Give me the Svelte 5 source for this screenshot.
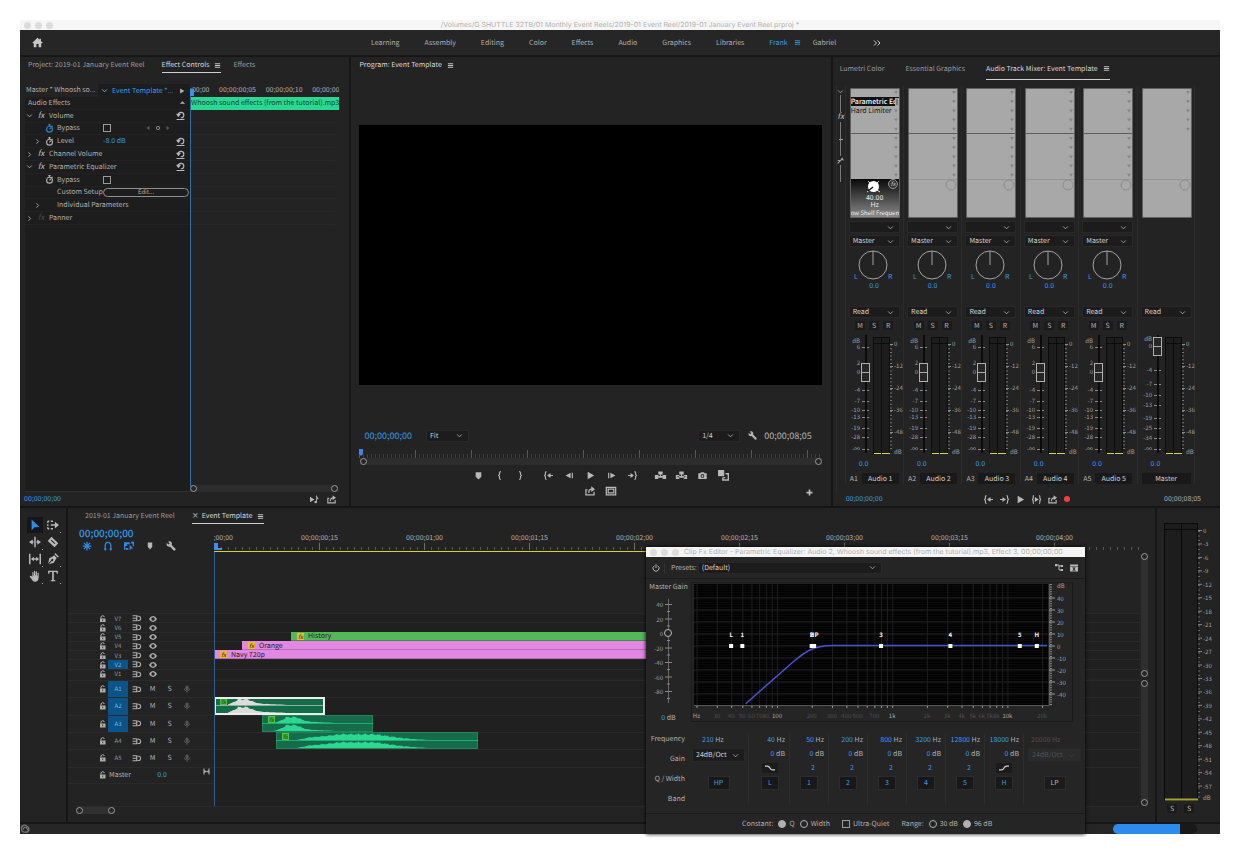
<script lang="ts">
  // Editing workspace: effect controls, program monitor, track mixer, timeline and the clip EQ window.

  interface Glyph {
    fill?: string;
    line?: string;
  }

  // All glyphs are drawn on a 16 x 16 grid.
  const ICONS: Record<string, Glyph> = {
    home: { fill: 'M8 1 0.5 8.2 1.8 9.4 2.6 8.7V15H6.4V10H9.6V15H13.4V8.7L14.2 9.4 15.5 8.2 13 5.8V2.5H11V4Z' },
    menu: { line: 'M2 4H14M2 8H14M2 12H14' },
    down: { line: 'M2.5 5.5 8 11 13.5 5.5' },
    right: { line: 'M5.5 3 10.5 8 5.5 13' },
    more: { line: 'M2 3 7 8 2 13M9 3 14 8 9 13' },
    up: { fill: 'M2 11H14L8 5Z' },
    play: { fill: 'M3 1.5V14.5L14.5 8Z' },
    watch: { line: 'M8 4A5.2 5.2 0 1 0 8 14.5 5.2 5.2 0 1 0 8 4M6 1H10M8 1V4M8 9.5 10.5 6.5M12 3.5 13.5 5' },
    reset: { line: 'M4 6.5A5 4.8 0 1 1 8.5 12M1 15H15', fill: 'M0 5 4.2 11 9 5Z' },
    keyL: { fill: 'M12 2V14L4 8Z' },
    keyR: { fill: 'M4 2V14L12 8Z' },
    keyDot: { line: 'M8 3.5A4.5 4.5 0 1 0 8 12.5 4.5 4.5 0 1 0 8 3.5' },
    note: { fill: 'M0 3V13L8 8ZM11 1H12.4Q12.6 4 15 6L14 9Q14 6.500 12.4 6V12.500A2.300 2.100 0 1 1 11 10.700Z' },
    share: { line: 'M4 6H1.500V14H14.500V9M6 11Q6 5 11 5', fill: 'M10 0.500 16 5 10 9.500Z' },
    marker: { fill: 'M3 2H13V10L8 15 3 10Z' },
    braceL: { line: 'M10.500 1Q8 1 8 3.500V6L6.500 8 8 10V12.500Q8 15 10.500 15' },
    braceR: { line: 'M5.500 1Q8 1 8 3.500V6L9.500 8 8 10V12.500Q8 15 5.500 15' },
    goIn: { line: 'M4.500 1Q2.500 1 2.500 3.500V6L1 8 2.500 10V12.500Q2.500 15 4.500 15M9 8H16', fill: 'M11.500 3.500V12.500L5.500 8Z' },
    goOut: { line: 'M11.500 1Q13.500 1 13.500 3.500V6L15 8 13.500 10V12.500Q13.500 15 11.500 15M0 8H7', fill: 'M4.500 3.500V12.500L10.500 8Z' },
    playIO: { line: 'M3.500 1Q2 1 2 3.500V6L0.800 8 2 10V12.500Q2 15 3.500 15M12.500 1Q14 1 14 3.500V6L15.200 8 14 10V12.500Q14 15 12.500 15', fill: 'M5 3.500V12.500L12 8Z' },
    stepBack: { fill: 'M10 3V13L1 8Z', line: 'M13 3V13' },
    stepFwd: { fill: 'M6 3V13L15 8Z', line: 'M3 3V13' },
    lift: { fill: 'M-2 7H4V14H-2ZM12 7H18V14H12ZM4 1H12V6H4ZM7 6H9V9H11V8L13 10.500 11 13V12H5V13L3 10.500 5 8V9H7Z' },
    extract: { fill: 'M4 1H12V6H4ZM-2 7H4V9H1V11H4V14H-2ZM18 7H12V9H15V11H12V14H18ZM7 6H9V9H13V12H3V9H7Z' },
    camera: { fill: 'M0.500 4H4L5.500 2H10.500L12 4H15.500V14H0.500ZM8 5.500A3.300 3.300 0 1 0 8 12.100 3.300 3.300 0 1 0 8 5.500ZM8 7A1.800 1.800 0 1 1 8 10.600 1.800 1.800 0 1 1 8 7Z' },
    compare: { fill: 'M0 0H9V9H0Z', line: 'M11 5.500H15V14.500H7V11M10.500 11H8' },
    safe: { line: 'M0.500 2H15.500V14H0.500ZM3.500 5H12.500V11H3.500Z' },
    plus: { fill: 'M6 1H10V6H15V10H10V15H6V10H1V6H6Z' },
    wrench: { fill: 'M1.200 3 4 5.600 5.900 3.800 3.300 1Q7-.5 9 2.500 10 4.500 9 6.300L15.500 12.800Q15.500 15.500 12.800 15.500L6.500 9Q3.500 10 1.500 7.500 0.300 5.500 1.200 3Z' },
    pointer: { fill: 'M3.500 0.500V15L7.500 11 14 10.500Z' },
    trackSel: { line: 'M1 3H3M5 3H8M1 13H3M5 13H8M1 3V5M1 7V9M1 11V13M5 8H12', fill: 'M10.500 3.500 16 8 10.500 12.500Z' },
    ripple: { line: 'M8 1V15M2 8H6M10 8H14', fill: 'M5 4.500V11.500L0 8ZM11 4.500V11.500L16 8Z' },
    razor: { fill: 'M6 1 15 9.500 10 15 1 6.500ZM5 6 10 10.800 11 9.700 6 5Z' },
    slip: { line: 'M1 1V15M15 1V15M4 8H12', fill: 'M6.500 5V11L2.500 8ZM9.500 5V11L13.500 8Z' },
    pen: { fill: 'M9.500 3 13 6.500 11.500 8.500 9 13 2.500 15 6.200 10.700A1.500 1.500 0 1 0 5.400 9.800L1.500 14 3 7 7.500 4.500ZM11 0 16 5 14.500 6 10 1.500Z' },
    hand: { fill: 'M4.500 9V3Q5.300 2 6 3V7H6.700V1.500Q7.500.5 8.300 1.500V7H9V2.200Q9.900 1.200 10.600 2.300V7.600H11.300V4Q12.200 3 12.900 4V10Q12.500 15 9 15.500H7.500Q5.500 15.500 4 13L0.800 8.500Q1.500 7 3 8Z' },
    type: { fill: 'M1.500 1H14.500V5H13L12.400 2.800H9.100V13.300L11 13.800V15H5V13.800L6.900 13.300V2.800H3.600L3 5H1.500Z' },
    nest: { line: 'M8 1V15M1 8H15M3 3 13 13M13 3 3 13' },
    magnet: { line: 'M3.500 15V7.500A4.500 5.500 0 0 1 12.500 7.500V15M1.500 13H5.500M10.500 13H14.500' },
    linked: { fill: 'M0 2H9V5H5V8H2V14H0ZM3 11H7V14H3ZM9 6 15 12 11.500 12 9 15ZM11 1H16V9L14 7V4H11Z' },
    shield: { fill: 'M3.500 1H12.500V9.500L8 15 3.500 9.500Z' },
    lock: { fill: 'M2 7H13V15H2ZM6.700 9V12.500H8.300V9Z', line: 'M4 7V4Q4.500 1.500 7.500 1.500 10.500 1.500 10.500 4' },
    sync: { line: 'M1 3H8.500V12H1M1 7.500H8M10 4H12.500A2.700 3.600 0 1 1 12.500 11.500H10' },
    eye: { fill: 'M0 8Q3 2 8 2 13 2 16 8 13 14 8 14 3 14 0 8ZM8 4.500A3.500 3.500 0 1 0 8 11.500 3.500 3.500 0 1 0 8 4.500Z' },
    mic: { fill: 'M5 3Q8-1.500 11 3V8.500Q8 12.500 5 8.500Z', line: 'M2.500 7Q3 12 8 12 13 12 13.500 7M8 12V15.500' },
    bowtie: { fill: 'M1 1H3.500V5L8 7.500 12.500 5V1H15V15H12.500V11L8 8.500 3.500 11V15H1Z' },
    power: { line: 'M4.500 3.500A6 6 0 1 0 11.500 3.500M8 0.500V8' },
    route: { fill: 'M0 0H4.500V4.500H0ZM11.500 2H16V6H11.500ZM11.500 10H16V14H11.500Z', line: 'M4 2.200H8V12H12M8 4H12' },
    closeBox: { fill: 'M0 1H16V4H0ZM0 5H16V15H0ZM4.500 6.500 7 10 4.500 13.500H7L8 11.600 9 13.500H11.500L9 10 11.500 6.500H9L8 8.400 7 6.500Z' },
    cloud: { line: 'M1 8A5 5 0 0 1 10 4 5 5 0 0 1 10 13H5A4.500 4.500 0 0 1 1 8M4 9A3 3 0 0 1 9 6L11 10M7 13Q14 13 12 7' },
    shelfL: { line: 'M0 5H4Q6.500 5 8 8 9.500 11 12 11H16' },
    shelfH: { line: 'M0 11H4Q6.500 11 8 8 9.500 5 12 5H16' },
    sendIcon: { line: 'M3 13 8 8H3M8 8 11 4 13 8' }
  };

  const workspaces = ['Learning', 'Assembly', 'Editing', 'Color', 'Effects', 'Audio', 'Graphics', 'Libraries'];

  interface EffectRow {
    label: string;
    level: 0 | 1 | 2;
    twirl?: 'down' | 'right';
    mark?: 'fx' | 'off' | 'watch' | 'active';
    value?: 'check' | 'level' | 'edit';
    keys?: boolean;
    reset?: boolean;
  }

  const effectRows: EffectRow[] = [
    { label: 'Volume', level: 1, twirl: 'down', mark: 'fx', reset: true },
    { label: 'Bypass', level: 2, mark: 'active', value: 'check', keys: true },
    { label: 'Level', level: 2, twirl: 'right', mark: 'watch', value: 'level', reset: true },
    { label: 'Channel Volume', level: 1, twirl: 'right', mark: 'fx', reset: true },
    { label: 'Parametric Equalizer', level: 1, twirl: 'down', mark: 'fx', reset: true },
    { label: 'Bypass', level: 2, mark: 'watch', value: 'check' },
    { label: 'Custom Setup', level: 2, value: 'edit' },
    { label: 'Individual Parameters', level: 2, twirl: 'right' },
    { label: 'Panner', level: 1, twirl: 'right', mark: 'off' }
  ];

  const transport = [
    ['marker', 'braceL', 'braceR'],
    ['goIn', 'stepBack', 'play', 'stepFwd', 'goOut'],
    ['lift', 'extract', 'camera', 'compare']
  ];
  const mixTransport = ['goIn', 'goOut', 'play', 'playIO', 'share'];
  const tools = ['pointer', 'trackSel', 'ripple', 'razor', 'slip', 'pen', 'hand', 'type'];
  const seqTools = ['nest', 'magnet', 'linked', 'shield', 'wrench'];

  type Mark = [string, number];

  // Fader scale labels: text and y inside the 120px fader block.
  const trackMarks: Mark[] = [['dB', 6], ['6', 12], ['2', 28], ['0', 37], ['-4', 55], ['-7', 66], ['-10', 75], ['-13', 82], ['-19', 93], ['-28', 102], ['-∞', 114]];
  const masterMarks: Mark[] = [['dB', 4], ['0', 11], ['-4', 35], ['-7', 49], ['-10', 60], ['-13', 70], ['-19', 83], ['-25', 93], ['-34', 103], ['-∞', 114]];
  const meterMarks: Mark[] = [['0', 9], ['-12', 31], ['-24', 53], ['-36', 75], ['-48', 97], ['dB', 117]];

  const strips = [1, 2, 3, 4, 5, 0].map((n) => ({
    id: n ? `A${n}` : '',
    name: n ? `Audio ${n}` : 'Master',
    master: n === 0,
    loaded: n === 1
  }));

  const videoTracks = ['V7', 'V6', 'V5', 'V4', 'V3', 'V2', 'V1'];
  const audioTracks = ['A1', 'A2', 'A3', 'A4', 'A5'];
  const targeted = ['V2', 'A1', 'A2', 'A3'];

  const MAJOR = 105;
  const timeMarks = ['00;00;00;00', '00;00;00;15', '00;00;01;00', '00;00;01;15', '00;00;02;00', '00;00;02;15', '00;00;03;00', '00;00;03;15', '00;00;04;00'];

  interface VideoClip {
    track: string;
    name: string;
    start: number;
    color: string;
  }
  const videoClips: VideoClip[] = [
    { track: 'V5', name: 'History', start: 77, color: 'green' },
    { track: 'V4', name: 'Orange', start: 28, color: 'pink' },
    { track: 'V3', name: 'Navy 720p', start: 0, color: 'pink' }
  ];
  const audioClips = [
    { track: 'A2', start: 0, width: 111, selected: true, from: 14, peak: 29, to: 75, hump: 10 },
    { track: 'A3', start: 48, width: 111, selected: false, from: 12, peak: 30, to: 75, hump: 10 },
    { track: 'A4', start: 62, width: 202, selected: false, from: 22, peak: 84, to: 150, hump: 36 }
  ];

  // Envelope of one channel, drawn upward from its baseline: a hump with a low tail.
  function wave(base: number, from: number, peak: number, to: number, hump: number): string {
    let d = `M${from} ${base}`;
    for (let x = from; x <= to; x++) {
      const away = (x - peak) / hump;
      const edge = Math.min((x - from) / 12, (to - x) / (to - peak), 1);
      const level = 0.85 * Math.exp(-away * away) + 0.35 * edge;
      const spike = 0.7 + 0.3 * Math.abs(Math.sin(x * 2.7) * Math.cos(x * 1.3));
      d += `L${x} ${(base - 7 * Math.min(level, 1) * spike).toFixed(1)}`;
    }
    return d + `L${to} ${base}Z`;
  }

  const masterMeter = Array.from({ length: 20 }, (_, i) => (i ? `-${3 * i}` : '0'));

  // Equalizer graph: log frequency across, 1.2px per dB upward.
  const freqX = (f: number) => 86 + 115.2 * Math.log10(f / 100);
  const gainY = (g: number) => 63.5 - 1.2 * g;
  const gridFreqs = [20, 30, 40, 50, 60, 70, 80, 90, 100, 200, 300, 400, 500, 600, 700, 800, 900, 1000, 2000, 3000, 4000, 5000, 6000, 7000, 8000, 9000, 10000, 20000];
  const freqLabels: [string, number][] = [['Hz', 20], ['30', 30], ['40', 40], ['50', 50], ['60', 60], ['70', 70], ['80', 80], ['100', 100], ['200', 200], ['300', 300], ['400', 400], ['500', 500], ['700', 700], ['1k', 1000], ['2k', 2000], ['3k', 3000], ['4k', 4000], ['5k', 5000], ['6k', 6000], ['7k', 7000], ['8k', 8000], ['10k', 10000], ['20k', 20000]];
  const strongLabels = ['Hz', '100', '1k', '10k'];
  const points: [string, number][] = [['L', 40], ['1', 50], ['2', 200], ['HP', 210], ['3', 800], ['4', 3200], ['5', 12800], ['H', 18000]];
  const gainMarks = [40, 30, 20, 10, 0, -10, -20, -30, -40];

  const bands = [
    { name: 'L', freq: 40, shelf: 'shelfL' },
    { name: '1', freq: 50 },
    { name: '2', freq: 200 },
    { name: '3', freq: 800 },
    { name: '4', freq: 3200 },
    { name: '5', freq: 12800 },
    { name: 'H', freq: 18000, shelf: 'shelfH' }
  ];

  let constant = $state('Q');
  let range = $state('96');
  let ultraQuiet = $state(false);
  let masterGain = $state(0);
</script>

{#snippet icon(name: string, size: number)}
  <svg class="icon" width={size} height={size} viewBox="0 0 16 16" aria-hidden="true">
    {#if ICONS[name].fill}<path class="solid" d={ICONS[name].fill} />{/if}
    {#if ICONS[name].line}<path class="stroke" d={ICONS[name].line} />{/if}
  </svg>
{/snippet}

{#snippet picker(value: string, label: string, disabled: boolean)}
  <span class="picker" class:disabled>
    <select aria-label={label} {disabled}><option>{value}</option></select>
    {@render icon('down', 7)}
  </span>
{/snippet}

{#snippet tabMenu()}
  <span class="tab-menu">{@render icon('menu', 7)}</span>
{/snippet}

<div class="page">
  <div class="app">
    <header class="titlebar">
      <span class="light"></span><span class="light"></span><span class="light"></span>
      <span class="doc">/Volumes/G SHUTTLE 32TB/01 Monthly Event Reels/2019-01 Event Reel/2019-01 January Event Reel.prproj *</span>
    </header>

    <div class="workbar">
      <button class="home" aria-label="Home">{@render icon('home', 11)}</button>
      <nav>
        {#each workspaces as name}
          <a href="#{name}">{name}</a>
        {/each}
        <a href="#Frank" class="current">Frank{@render tabMenu()}</a>
        <a href="#Gabriel" class="near">Gabriel</a>
        <button class="overflow" aria-label="More workspaces">{@render icon('more', 8)}</button>
      </nav>
    </div>

    <div class="upper">
      <section class="panel controls">
        <div class="tabs">
          <button class="tab">Project: 2019-01 January Event Reel</button>
          <button class="tab active second">Effect Controls{@render tabMenu()}</button>
          <button class="tab third">Effects</button>
        </div>
        <div class="fx-body">
          <div class="fx-list">
            <div class="fx-head">
              <span class="src">Master * Whoosh so...</span>
              <button class="seq">{@render icon('down', 7)}<span>Event Template *...</span></button>
              {@render icon('play', 6)}
            </div>
            <div class="fx-rows">
              <div class="fx-row group"><span>Audio Effects</span>{@render icon('up', 7)}</div>
              {#each effectRows as row}
                <div class="fx-row" class:deep={row.level === 2}>
                  <div class="prop">
                    <span class="twirl">{#if row.twirl}{@render icon(row.twirl, 7)}{/if}</span>
                    <span class="mark" class:off={row.mark === 'off'} class:on={row.mark === 'active'}>
                      {#if row.mark === 'fx' || row.mark === 'off'}
                        <i>fx</i>
                      {:else if row.mark}
                        {@render icon('watch', 9)}
                      {/if}
                    </span>
                    <span class="name">{row.label}</span>
                  </div>
                  <div class="value">
                    {#if row.value === 'check'}
                      <input type="checkbox" aria-label={row.label} />
                    {:else if row.value === 'level'}
                      <span class="num">-8.0 dB</span>
                    {:else if row.value === 'edit'}
                      <button class="edit">Edit...</button>
                    {/if}
                    {#if row.keys}
                      <span class="keys">
                        {@render icon('keyL', 6)}<b>{@render icon('keyDot', 6)}</b>{@render icon('keyR', 6)}
                      </span>
                    {/if}
                  </div>
                  {#if row.reset}<button class="reset" aria-label="Reset {row.label}">{@render icon('reset', 9)}</button>{/if}
                </div>
              {/each}
            </div>
          </div>
          <div class="fx-time">
            <div class="fx-ruler"><span class="first">;00;00</span><span>00;00;00;05</span><span>00;00;00;10</span><span>00;00;00</span></div>
            <div class="fx-lanes">
              <div class="fx-clip">Whoosh sound effects (from the tutorial).mp3</div>
              {#each effectRows as _}<div class="fx-lane"></div>{/each}
            </div>
            <div class="zoombar"><i></i><i></i></div>
            <div class="playhead"></div>
          </div>
        </div>
        <footer class="fx-foot">
          <span class="num">00;00;00;00</span>
          <span class="pair">{@render icon('note', 9)}{@render icon('share', 9)}</span>
        </footer>
      </section>

      <section class="panel program">
        <div class="tabs"><button class="tab lit">Program: Event Template{@render tabMenu()}</button></div>
        <div class="viewer"></div>
        <div class="monitor-bar">
          <span class="tc">00;00;00;00</span>
          <span class="fit">{@render picker('Fit', 'Zoom level', false)}</span>
          <span class="res">{@render picker('1/4', 'Playback resolution', false)}</span>
          {@render icon('wrench', 9)}
          <span class="dur">00;00;08;05</span>
        </div>
        <svg class="scrub" height="12" aria-hidden="true">
          <defs>
            <pattern id="minor" width="4" height="12" patternUnits="userSpaceOnUse"><rect y="6" width="1" height="4" fill="#3e3e3e" /></pattern>
            <pattern id="major" width="56" height="12" patternUnits="userSpaceOnUse"><rect y="2" width="1" height="8" fill="#585858" /></pattern>
          </defs>
          <rect width="100%" height="12" fill="url(#minor)" />
          <rect width="100%" height="12" fill="url(#major)" />
          <path d="M0 1H4V6L2 8 0 6Z" fill="#3d86e8" />
        </svg>
        <div class="zoombar"><i></i><i></i></div>
        <div class="buttons">
          {#each transport as group}
            <div class="button-group">
              {#each group as name}
                <button aria-label={name}>{@render icon(name, name === 'compare' ? 11 : 9)}</button>
              {/each}
            </div>
          {/each}
        </div>
        <div class="buttons second-row">
          <button aria-label="Export">{@render icon('share', 10)}</button>
          <button aria-label="Safe margins">{@render icon('safe', 10)}</button>
          <button class="add" aria-label="Button editor">{@render icon('plus', 7)}</button>
        </div>
      </section>

      <section class="panel mixer">
        <div class="tabs tall">
          <button class="tab">Lumetri Color</button>
          <button class="tab middle">Essential Graphics</button>
          <button class="tab active middle">Audio Track Mixer: Event Template{@render tabMenu()}</button>
        </div>
        <div class="mix-body">
          <div class="rack-side">
            {@render icon('down', 7)}<hr /><i>fx</i><hr /><span></span><hr />{@render icon('sendIcon', 9)}<hr />
          </div>
          {#each strips as strip}
            <div class="strip">
              <div class="rack">
                <svg width="50" height="130" viewBox="0 0 50 130" aria-hidden="true">
                  {#each Array(strip.master ? 5 : 10) as _, i}
                    {#if !strip.loaded || i !== 1}<path d="M44 {3 + i * 9.2}h4l-2 3z" fill="#868686" />{/if}
                  {/each}
                  {#if !strip.master}<rect y="45" width="50" height="1" fill="#5c5c5c" />{/if}
                  <rect y="91" width="50" height="1" fill="#969696" />
                  {#if !strip.loaded}<circle cx="43" cy="97" r="5" fill="none" stroke="#8b8b8b" />{/if}
                </svg>
                {#if strip.loaded}
                  <div class="inserts">
                    <button class="slot picked"><span>Parametric Ec</span><b></b></button>
                    <button class="slot">Hard Limiter</button>
                    <div class="tweak">
                      <svg width="50" height="16" viewBox="0 0 50 16" aria-hidden="true">
                        <path d="M18 2l2 2M29 2l-2 2M17 13l3-2M30 13l-3-2" stroke="#ddd" fill="none" />
                        <circle cx="23.500" cy="7.500" r="5.500" fill="#fff" />
                        <path d="M23 8l-5 4" stroke="#111" stroke-width="1.500" />
                        <circle cx="43" cy="5" r="4.500" fill="#333" stroke="#999" />
                        <text x="43" y="7" class="fx-badge">fx</text>
                      </svg>
                      <span>40.00</span><span>Hz</span><span class="param">ow Shelf Frequency</span>
                    </div>
                  </div>
                {/if}
              </div>
              {#if !strip.master}
                <div class="cell input">{@render picker('', `${strip.name} input`, false)}</div>
                <div class="cell output">{@render picker('Master', `${strip.name} output`, false)}</div>
                <div class="cell pan">
                  <svg width="50" height="31" viewBox="0 0 50 31" aria-hidden="true">
                    <circle cx="24" cy="15" r="14" fill="none" stroke="#a3a3a3" />
                    <path d="M24 1V15" stroke="#a3a3a3" />
                    <text x="5" y="29">L</text><text x="39" y="29">R</text>
                  </svg>
                  <span class="num">0.0</span>
                </div>
              {/if}
              <div class="cell auto">{@render picker('Read', `${strip.name} automation`, false)}</div>
              {#if !strip.master}
                <div class="cell msr"><button>M</button><button>S</button><button>R</button></div>
              {/if}
              <div class="fader">
                <svg width="56" height="120" viewBox="0 0 56 120" aria-hidden="true">
                  {#each strip.master ? masterMarks : trackMarks as [text, y]}
                    <text class="lm" x="10" y={y + 2}>{text}</text>
                    {#if text !== 'dB'}<path d="M12 {y + 0.5}h7" stroke="#8c8c8c" />{/if}
                  {/each}
                  <rect x="23.500" y="2.500" width="16" height="116" fill="#1d1d1d" stroke="#0c0c0c" />
                  <path d="M24 8.500H40M31.500 3V118" stroke="#0c0c0c" />
                  <path d="M24 118.500H31M32 118.500H40" stroke="#d8d43a" stroke-width="1" />
                  <path d="M41 9.500V116" stroke="#777" stroke-width="2" stroke-dasharray="1 2.700" />
                  {#each meterMarks as [text, y]}
                    {#if text !== 'dB'}<path d="M40 {y + 0.5}h3" stroke="#8c8c8c" />{/if}
                    <text x="44" y={y + 2}>{text}</text>
                  {/each}
                </svg>
                <input class="level" type="range" min="0" max="100" value={strip.master ? 98 : 72} aria-label="{strip.name} volume" />
              </div>
              <span class="num vol">0.0</span>
              <div class="cell title">
                {#if strip.id}<span>{strip.id}</span>{/if}
                <input type="text" value={strip.name} aria-label="Track name" />
              </div>
            </div>
          {/each}
        </div>
        <footer class="mix-foot">
          <span class="num">00;00;00;00</span>
          <div class="mix-buttons">
            {#each mixTransport as name}<button aria-label={name}>{@render icon(name, 9)}</button>{/each}
            <button class="rec" aria-label="Record"></button>
          </div>
          <span>00;00;08;05</span>
        </footer>
      </section>
    </div>

    <div class="lower">
      <aside class="panel tools">
        {#each tools as name, i}
          <button class:chosen={i === 0} class:nested={i !== 0 && i !== 3} aria-label={name}>{@render icon(name, 12)}</button>
        {/each}
      </aside>

      <section class="panel timeline">
        <div class="tabs">
          <button class="tab">2019-01 January Event Reel</button>
          <button class="tab active closable"><span class="x">×</span>Event Template{@render tabMenu()}</button>
        </div>
        <div class="seq-grid">
          <div class="seq-head">
            <span class="big-tc">00;00;00;00</span>
            <div class="seq-tools">
              {#each seqTools as name, i}
                <button class:lit={i < 3} aria-label={name}>{@render icon(name, i === 3 ? 8 : 10)}</button>
              {/each}
            </div>
          </div>
          <div class="ruler">
            <div class="labels">
              {#each timeMarks as mark}<span style="width: {MAJOR}px">{mark}</span>{/each}
            </div>
            <svg height="8" aria-hidden="true">
              <defs>
                <pattern id="frame" width="7" height="8" patternUnits="userSpaceOnUse"><rect y="4" width="1" height="3" fill="#585858" /></pattern>
                <pattern id="half" width={MAJOR} height="8" patternUnits="userSpaceOnUse"><rect width="1" height="7" fill="#707070" /></pattern>
              </defs>
              <rect width="100%" height="8" fill="url(#frame)" />
              <rect width="100%" height="8" fill="url(#half)" />
              <path d="M0 0H4V5H8V7H0Z" fill="#3d8fee" />
            </svg>
            <div class="work-area"></div>
          </div>

          <div class="heads video">
            {#each videoTracks as name}
              <div class="head">
                {@render icon('lock', 8)}
                <button class:target={targeted.includes(name)}>{name}</button>
                {@render icon('sync', 9)}
                {@render icon('eye', 8)}
              </div>
            {/each}
          </div>
          <div class="lanes video">
            {#each videoTracks as name}
              <div class="lane">
                {#each videoClips.filter((c) => c.track === name) as clip}
                  <div class="clip {clip.color}" style="left: {clip.start}px"><i class="badge">fx</i><span>{clip.name}</span></div>
                {/each}
              </div>
            {/each}
          </div>

          <div class="heads audio">
            {#each audioTracks as name}
              <div class="head">
                {@render icon('lock', 8)}
                <button class:target={targeted.includes(name)}>{name}</button>
                {@render icon('sync', 9)}
                <button class="flat">M</button>
                <button class="flat">S</button>
                <span class="dim">{@render icon('mic', 8)}</span>
              </div>
            {/each}
            <div class="head master">
              {@render icon('lock', 8)}
              <span class="master-name">Master</span>
              <span class="num">0.0</span>
              <span class="tie">{@render icon('bowtie', 7)}</span>
            </div>
          </div>
          <div class="lanes audio">
            {#each [...audioTracks, 'Master'] as name}
              <div class="lane">
                {#each audioClips.filter((c) => c.track === name) as clip}
                  <div class="clip sound" class:selected={clip.selected} style="left: {clip.start}px; width: {clip.width}px">
                    <svg width={clip.width} height="17" aria-hidden="true">
                      <path d={wave(8, clip.from, clip.peak, clip.to, clip.hump)} />
                      <path d={wave(16, clip.from, clip.peak, clip.to, clip.hump)} />
                      <rect y="8" width="100%" height="1" opacity="0.6" />
                    </svg>
                    <i class="badge">fx</i>
                  </div>
                {/each}
              </div>
            {/each}
          </div>
          <div class="seq-left-pad"></div>
          <div class="seq-right-pad"></div>
          <div class="rails"><div class="rail one"><i></i><i></i></div><div class="rail two"><i></i><i></i></div></div>
          <div class="seq-line"></div>
        </div>
        <div class="seq-scroll"><div class="thumb"><i></i><i></i></div></div>
      </section>

      <aside class="panel meters">
        <svg width="63" height="280" viewBox="0 0 63 280" aria-hidden="true">
          <rect x="7.500" y="1.500" width="33" height="277" fill="#1d1d1d" stroke="#0a0a0a" />
          <path d="M7 7.500H41M24.500 2V278" stroke="#0a0a0a" />
          <path d="M8 277.500H41" stroke="#a5a332" stroke-width="2" />
          <path d="M42 9V278" stroke="#666" stroke-width="2" stroke-dasharray="1 3.500" />
          {#each masterMeter as text, i}
            <path d="M41 {8.5 + i * 13.45}h4" stroke="#888" />
            <text x="46" y={11 + i * 13.45}>{text}</text>
          {/each}
          <text x="46" y="278">dB</text>
        </svg>
        <div class="solo"><button>S</button><button>S</button></div>
      </aside>
    </div>

    <div class="status">
      <button aria-label="Sync settings">{@render icon('cloud', 10)}</button>
      <div class="progress"><div></div></div>
    </div>

    <div class="dialog" role="dialog" aria-label="Clip Fx Editor">
      <div class="dlg-title">
        <span class="light"></span><span class="light"></span><span class="light"></span>
        <span>Clip Fx Editor - Parametric Equalizer: Audio 2, Whoosh sound effects (from the tutorial).mp3, Effect 3, 00;00;00;00</span>
      </div>
      <div class="dlg-bar">
        <button aria-label="Toggle power">{@render icon('power', 8)}</button>
        <span class="presets-label">Presets:</span>
        <span class="presets">{@render picker('(Default)', 'Presets', false)}</span>
        <span class="dlg-icons"><button aria-label="Routing">{@render icon('route', 8)}</button><button aria-label="Close">{@render icon('closeBox', 8)}</button></span>
      </div>
      <div class="dlg-main">
        <div class="gain">
          <span>Master Gain</span>
          <div class="gain-scale">
            <svg width="44" height="110" viewBox="0 0 44 110" aria-hidden="true">
              <path d="M21.500 3V107" stroke="#666" />
              {#each [40, 20, 0, -20, -40, -60, -80] as mark, i}
                <text x="16" y={11 + i * 14.5}>{mark}</text>
                <path d="M18 {8.5 + i * 14.5}h7M20 {15.5 + i * 14.5}h3" stroke="#888" />
              {/each}
            </svg>
            <input type="range" min="-96" max="48" bind:value={masterGain} aria-label="Master gain" />
          </div>
          <span class="gain-value"><b>{masterGain}</b> dB</span>
        </div>
        <svg class="graph" width="382" height="140" viewBox="0 0 382 140" role="img" aria-label="Equalizer response">
          <rect x="0.500" y="0.500" width="381" height="139" fill="none" stroke="#1b1b1b" />
          <rect x="3" y="2" width="354" height="121" fill="#000" />
          {#each Array(50) as _, i}<rect x="3" y={3 + i * 2.4} width="354" height="1" fill="#0d0d0d" />{/each}
          {#each gridFreqs as f}
            <rect x={freqX(f)} y="2" width="1" height="121" fill="#1d1d1d" />
            <rect x={freqX(f)} y="123" width="1" height="3" fill="#9a9a9a" />
          {/each}
          <path d="M3 123.500H358.500V2" stroke="#5a5a5a" fill="none" />
          <path d="M360 2V123" stroke="#8a8a8a" stroke-width="2" stroke-dasharray="1 1.400" />
          {#each gainMarks as g}
            <rect x="3" y={gainY(g)} width="354" height="1" fill="#222" />
            <rect x="358" y={gainY(g)} width="6" height="1" fill="#9a9a9a" />
            <text x="366" y={gainY(g) + 3}>{g}</text>
          {/each}
          <text x="366" y="6">dB</text>
          {#each freqLabels as [text, f]}
            <text class="freq" class:strong={strongLabels.includes(text)} x={freqX(f)} y="136">{text}</text>
          {/each}
          <path d="M54.700 121.700 102 80C114 70 122 63.600 141 63.500H356" fill="none" stroke="#4a54cf" stroke-width="1.500" />
          {#each points as [text, f]}
            <rect x={freqX(f) - 2} y="62" width="4" height="4" fill="#fff" />
            <text class="point" x={freqX(f)} y="55">{text}</text>
          {/each}
        </svg>
      </div>
      <div class="dlg-bands">
        <div class="row-names"><span>Frequency</span><span>Gain</span><span>Q / Width</span><span>Band</span></div>
        <div class="band pass">
          <span class="hz"><b>210</b> Hz</span>
          {@render picker('24dB/Oct', 'High pass slope', false)}
          <button class="toggle on">HP</button>
        </div>
        {#each bands as band}
          <div class="band">
            <span><b>{band.freq}</b> Hz</span>
            <span><b>0</b> dB</span>
            {#if band.shelf}
              <button class="shelf" aria-label="Shelf slope {band.name}">{@render icon(band.shelf, 10)}</button>
            {:else}
              <span class="q"><b>2</b></span>
            {/if}
            <button class="toggle on">{band.name}</button>
          </div>
        {/each}
        <div class="band pass low">
          <span class="hz">20000 Hz</span>
          {@render picker('24dB/Oct', 'Low pass slope', true)}
          <button class="toggle">LP</button>
        </div>
      </div>
      <div class="dlg-foot">
        <span>Constant:</span>
        <label><input type="radio" value="Q" bind:group={constant} />Q</label>
        <label><input type="radio" value="Width" bind:group={constant} />Width</label>
        <label class="quiet"><input type="checkbox" bind:checked={ultraQuiet} />Ultra-Quiet</label>
        <span class="range-name">Range:</span>
        <label><input type="radio" value="30" bind:group={range} />30 dB</label>
        <label><input type="radio" value="96" bind:group={range} />96 dB</label>
      </div>
    </div>
  </div>
</div>

<style>
  :global(body) { background: #fff; }
  .page { padding: 20px; }
  .page, button, input, select {
    font-family: "Noto Sans CJK SC", "Open Sans", sans-serif;
    font-size: 7px;
    line-height: 10px;
    color: #b0b0b0;
    text-rendering: geometricPrecision;
  }
  .page * { box-sizing: border-box; }
  button { display: flex; align-items: center; padding: 0; border: 0; background: none; white-space: nowrap; }
  a { color: inherit; text-decoration: none; }
  input, select { margin: 0; padding: 0; border: 0; background: none; }
  .num { color: #359be8; }
  .icon { display: block; flex: none; overflow: visible; }
  .solid { fill: currentColor; fill-rule: evenodd; }
  .stroke { fill: none; stroke: currentColor; stroke-width: 2; }
  text { font-size: 6px; fill: #a0a0a0; }

  .app { position: relative; display: flex; flex-direction: column; gap: 2px; background: #161616; }
  .panel { background: #232323; min-width: 0; }

  .titlebar { display: flex; align-items: center; gap: 4px; height: 10px; padding: 0 37px 0 4px; background: #f6f6f6; margin-bottom: -2px; }
  .light { width: 7px; height: 7px; border-radius: 50%; background: #dcdcdc; flex: none; }
  .doc, .dlg-title { font-family: Inter, "Liberation Sans", sans-serif; color: #b2b2b2; white-space: nowrap; }
  .doc { flex: 1; text-align: center; }

  .workbar { display: grid; grid-template-columns: 351fr 849fr; align-items: center; height: 25px; background: #262626; }
  .home { margin-left: 12px; color: #c6c6c6; }
  nav { display: flex; align-items: center; gap: 25px; }
  .current { display: flex; align-items: center; color: #359be8; }
  .near { margin-left: -13px; }
  .overflow { margin-left: 12px; color: #c6c6c6; }
  .tab-menu { margin-left: 5px; }
  .current .tab-menu { margin-left: 6px; }

  .upper { display: grid; grid-template-columns: 330fr 480fr 388fr; gap: 2px; }
  .tabs { display: flex; height: 16px; padding-left: 8px; }
  .tab { padding-top: 1px; border-bottom: 1px solid transparent; color: #9a9a9a; }
  .tab.active, .tab.lit { color: #d8d8d8; }
  .tab.active { border-color: #cfcfcf; }
  .tab.second { margin-left: 17px; }
  .tab.third { margin-left: 12px; }
  .tab.middle { margin-left: 21px; }

  .controls { display: flex; flex-direction: column; }
  .fx-body { flex: 1; display: grid; grid-template-columns: 165px 1fr; margin: 11px 10px 0 5px; }
  .fx-list { background: #1d1d1d; border-bottom: 1px solid #303030; min-width: 0; }
  .fx-head { display: flex; align-items: center; height: 13px; padding-right: 5px; white-space: nowrap; color: #b0b0b0; }
  .src { width: 73px; padding-left: 1px; background: #232323; line-height: 13px; }
  .seq { gap: 4px; flex: 1; padding-left: 3px; }
  .seq span { color: #359be8; }
  .fx-rows { display: grid; grid-auto-rows: 1fr; height: 128px; }
  .fx-row { display: flex; align-items: center; border-bottom: 1px solid #222; white-space: nowrap; }
  .fx-row.group { justify-content: space-between; padding: 0 4px 0 3px; }
  .prop { display: flex; align-items: center; width: 78px; }
  .deep .prop { padding-left: 8px; }
  .twirl { display: flex; justify-content: center; width: 8px; flex: none; }
  .mark { display: flex; justify-content: center; width: 16px; flex: none; }
  .mark i, .rack-side i { font-size: 8px; font-style: italic; color: #c0c0c0; }
  .mark.off i { color: #4a4a4a; }
  .mark.on { color: #2f86cc; }
  .value { flex: 1; display: flex; align-items: center; gap: 34px; }
  .edit { flex: 1; justify-content: center; height: 9px; margin-right: 1px; border: 1px solid #909090; border-radius: 5px; font-size: 6px; }
  .keys { display: flex; gap: 4px; color: #555; }
  .keys b { color: #aaa; }
  .reset { margin-right: 5px; color: #b8b8b8; }
  input[type="checkbox"] { appearance: none; width: 8px; height: 8px; border: 1px solid #9a9a9a; }
  input[type="checkbox"]:checked { background: #b5b5b5; }

  .fx-time { position: relative; display: flex; flex-direction: column; min-width: 0; }
  .fx-ruler { display: flex; justify-content: space-between; height: 13px; line-height: 13px; white-space: nowrap; overflow: hidden; }
  .fx-lanes { display: grid; grid-auto-rows: 1fr; height: 128px; }
  .fx-clip { display: flex; align-items: center; padding-left: 1px; background: #2bd893; color: #0d4a31; white-space: nowrap; }
  .fx-lane { border-bottom: 1px solid #282828; margin-right: 4px; }
  .fx-time .zoombar { margin-top: auto; }
  .playhead { position: absolute; left: 0; top: 5px; bottom: 4px; width: 1px; background: #2f6da3; }
  .playhead::before { content: ''; display: block; width: 4px; height: 7px; background: #3d8fee; }
  .zoombar { display: flex; justify-content: space-between; align-items: center; height: 7px; background: #2d2d2d; margin-right: 1px; }
  .zoombar i, .rail i, .thumb i { display: block; width: 7px; height: 7px; border: 1px solid #9a9a9a; border-radius: 50%; background: #262626; flex: none; }
  .fx-foot { display: flex; justify-content: space-between; align-items: center; height: 14px; padding: 0 13px 0 4px; color: #b5b5b5; }
  .pair { display: flex; gap: 8px; }

  .program { display: flex; flex-direction: column; padding: 0 9px 0 8px; }
  .program .tabs { padding: 0; }
  .viewer { aspect-ratio: 16 / 9; margin-top: 52px; background: #000; }
  .monitor-bar { display: flex; align-items: center; margin: 46px 10px 0 5px; color: #b8b8b8; }
  .tc { font-size: 9px; color: #359be8; margin-right: 15px; }
  .dur { font-size: 9px; margin-left: 7px; }
  .fit { width: 41px; }
  .res { width: 40px; margin: 0 9px 0 auto; }
  .scrub { width: 100%; margin-top: 7px; }
  .program .zoombar { margin: -2px 0 0 1px; }
  .buttons { display: flex; justify-content: center; gap: 18px; margin-top: 6px; padding-left: 20px; color: #b8b8b8; }
  .button-group { display: flex; gap: 11px; }
  .buttons button { width: 10px; height: 10px; justify-content: center; color: #b8b8b8; }
  .second-row { position: relative; gap: 11px; margin-top: 5px; }
  .buttons .add { position: absolute; right: 7px; top: 2px; }

  .picker { display: grid; grid-template-columns: 1fr 12px; align-items: center; height: 10px; background: #1c1c1c; outline: 1px solid #282828; color: #a8a8a8; }
  .picker select { grid-area: 1 / 1 / 2 / 3; appearance: none; width: 100%; height: 10px; padding-left: 3px; color: #d0d0d0; border-radius: 0; }
  .picker .icon { grid-area: 1 / 2; pointer-events: none; }
  .picker.disabled { background: #2b2b2b; color: #444; }
  .picker.disabled select { color: #505050; opacity: 1; }

  .mixer { display: flex; flex-direction: column; }
  .tabs.tall { height: 23px; padding-left: 7px; }
  .mix-body { display: grid; grid-template-columns: 8px repeat(6, 1fr); margin: 6px 25px 0 3px; border-left: 1px solid #2c2c2c; padding-bottom: 9px; }
  .rack-side { display: flex; flex-direction: column; align-items: center; height: 96px; padding-top: 2px; color: #a0a0a0; }
  .rack-side hr { flex: 1; width: 1px; margin: 0; border: 0; background: #7a7a7a; }
  .rack-side span { width: 4px; height: 1px; background: #a0a0a0; }
  .strip {
    display: grid;
    grid-template-columns: 50px;
    grid-template-rows: 130px 10px 10px 53px 10px 10px 120px 10px 11px;
    row-gap: 4px;
    padding: 2px 0 0 4px;
    border-left: 1px solid #2c2c2c;
    min-width: 0;
  }
  .strip:last-child { border-right: 1px solid #2c2c2c; }
  .rack { display: grid; background: #a8a8a8; border-radius: 2px; outline: 1px solid #606060; outline-offset: -1px; overflow: hidden; }
  .rack > * { grid-area: 1 / 1; }
  .inserts { display: flex; flex-direction: column; padding: 9px 1px 1px; min-width: 0; }
  .slot { height: 9px; color: #151515; width: 100%; }
  .slot.picked { background: #111; color: #fff; font-weight: 500; }
  .slot.picked span { flex: 1; overflow: hidden; text-align: left; min-width: 0; }
  .slot.picked b { width: 4px; height: 8px; background: #777; border: 1px solid #aaa; }
  .tweak { display: flex; flex-direction: column; align-items: center; height: 38px; margin-top: auto; line-height: 7px; color: #eee; background: linear-gradient(#080808, #8a8a8a); overflow: hidden; }
  .tweak svg { flex: none; }
  .fx-badge { font-style: italic; text-anchor: middle; fill: #ccc; }
  .param { font-size: 6px; white-space: nowrap; align-self: flex-start; }
  .strip .cell { width: 49px; }
  .input { grid-row: 2; }
  .output { grid-row: 3; }
  .pan { grid-row: 4; display: flex; flex-direction: column; align-items: center; }
  .pan text { font-size: 7px; fill: #359be8; }
  .auto { grid-row: 5; }
  .msr { grid-row: 6; display: flex; justify-content: center; gap: 4px; }
  .msr button, .solo button { width: 10px; height: 9px; justify-content: center; background: #1b1b1b; color: #b0b0b0; font-size: 7px; }
  .fader { grid-row: 7; display: grid; }
  .fader > * { grid-area: 1 / 1; }
  .lm { text-anchor: end; }
  .level { appearance: none; writing-mode: vertical-lr; direction: rtl; width: 10px; height: 118px; margin-left: 11px; }
  .level::-webkit-slider-runnable-track { background: linear-gradient(90deg, transparent 4px, #0b0b0b 4px, #0b0b0b 6px, transparent 6px); height: 100%; width: 10px; }
  .level::-webkit-slider-thumb { appearance: none; width: 9px; height: 19px; border: 1px solid #b0b0b0; background: linear-gradient(#262626 8px, #aaa 8px, #aaa 9px, #262626 9px); }
  .vol { grid-row: 8; padding-left: 9px; }
  .title { grid-row: 9; display: flex; align-items: center; justify-content: space-between; white-space: nowrap; }
  .title input { width: 37px; height: 11px; background: #191919; color: #d0d0d0; text-align: center; }
  .title input:first-child { width: 49px; }
  .mix-foot { display: flex; justify-content: space-between; align-items: center; height: 12px; padding: 0 19px 0 13px; margin-top: auto; margin-bottom: 1px; }
  .mix-buttons { display: flex; align-items: center; gap: 7px; padding-left: 8px; color: #b8b8b8; }
  .mix-buttons button { color: #b8b8b8; }
  .rec { width: 6px; height: 6px; border-radius: 50%; background: #f0413e; }

  .lower { display: grid; grid-template-columns: 46px 1fr 63px; gap: 2px; height: 314px; }
  .tools { display: grid; grid-template-columns: 18px 18px; grid-auto-rows: 17px; padding: 9px 0 0 7px; align-content: start; color: #b8b8b8; }
  .tools button { position: relative; justify-content: center; width: 16px; height: 16px; color: #b8b8b8; }
  .tools .chosen { background: #161616; color: #2d8ceb; }
  .tools .nested::after { content: ''; position: absolute; right: 0; bottom: 0; width: 1px; height: 1px; background: #aaa; }

  .timeline { display: flex; flex-direction: column; }
  .timeline .tabs { padding-left: 17px; }
  .closable { margin-left: 17px; }
  .x { width: 10px; text-align: left; }
  .seq-grid { position: relative; display: grid; grid-template-columns: 146px 1fr 16px; grid-template-rows: 28px 61px 65px 2px 104px 22px; }
  .seq-head { grid-area: 1 / 1; padding-left: 11px; }
  .big-tc { display: block; font-size: 10px; font-weight: 500; line-height: 18px; color: #2d9af0; }
  .seq-tools { display: flex; gap: 5px; padding-left: 0; }
  .seq-tools button { width: 16px; height: 8px; justify-content: center; color: #b8b8b8; }
  .seq-tools .lit { color: #2d8ceb; }
  .ruler { grid-area: 1 / 2; overflow: hidden; display: flex; flex-direction: column; justify-content: flex-end; min-width: 0; }
  .ruler svg { width: 100%; flex: none; }
  .work-area { height: 1px; margin-right: 480px; background: #d7cf3c; flex: none; }
  .labels { display: flex; margin-left: -52px; }
  .labels span { flex: none; text-align: center; }
  .heads { grid-column: 1; display: grid; grid-auto-rows: 1fr; }
  .heads.video { grid-row: 3; }
  .heads.audio { grid-row: 5; }
  .lanes { grid-column: 2; display: grid; grid-auto-rows: 1fr; overflow: hidden; background: #202020; }
  .lanes.video { grid-row: 3; }
  .lanes.audio { grid-row: 5; }
  .head { display: grid; grid-template-columns: 10px 20px 16px 17px 17px 17px; align-items: center; justify-items: center; padding-left: 30px; border-top: 1px solid #2a2a2a; color: #b0b0b0; min-height: 0; }
  .head button { width: 20px; height: 100%; justify-content: center; font-size: 6px; line-height: 8px; color: #9a9a9a; min-height: 0; }
  .head .target { background: #0b5489; color: #7fb4dc; }
  .head .flat { width: auto; font-size: 7px; color: #b0b0b0; }
  .dim { color: #555; }
  .head.master { grid-template-columns: 10px 24px 60px 18px; border-bottom: 1px solid #2a2a2a; }
  .tie { justify-self: end; align-self: start; }
  .lane { position: relative; border-top: 1px solid #2a2a2a; min-height: 0; }
  .clip { position: absolute; top: -1px; bottom: 0; right: 480px; display: flex; align-items: center; gap: 4px; padding-left: 6px; color: #222; white-space: nowrap; overflow: hidden; }
  .clip.pink { background: #e387e4; box-shadow: inset 0 -1px #b46cb5; }
  .clip.green { background: #53b858; box-shadow: inset 0 -1px #418f45; }
  .badge { width: 7px; height: 7px; background: #ecb92f; color: #222; font-size: 6px; line-height: 7px; text-align: center; flex: none; }
  .clip.sound { right: auto; align-items: flex-start; padding: 1px 0 0 6px; background: #146c4a; box-shadow: inset 0 0 0 1px #22835d; }
  .sound .badge { background: #3ea535; color: #063; position: relative; outline: 1px solid #5bc03a; outline-offset: -1px; }
  .sound svg { position: absolute; left: 0; top: 0; fill: #2bd893; }
  .sound.selected svg { fill: #dcdcdc; }
  .sound.selected::after { content: ''; position: absolute; inset: 0; border: 2px solid #ececec; }
  .seq-left-pad { grid-area: 6 / 1; }
  .seq-right-pad { grid-area: 6 / 2; background: #202020; }
  .rails { grid-area: 1 / 3 / 7 / 4; display: flex; flex-direction: column; align-items: center; gap: 3px; padding: 29px 6px 0 0; }
  .rail { display: flex; flex-direction: column; justify-content: space-between; width: 7px; background: #2f2f2f; border-radius: 4px; }
  .rail.one { height: 124px; }
  .rail.two { flex: 1; }
  .seq-line { position: absolute; left: 146px; top: 28px; bottom: 0; width: 1px; background: #2f5f8c; }
  .seq-scroll { margin: 0 16px 0 8px; border-top: 1px solid #2a2a2a; height: 8px; }
  .thumb { display: flex; justify-content: space-between; width: 39px; height: 7px; background: #303030; border-radius: 4px; }

  .meters { padding-top: 14px; }
  .meters svg { display: block; }
  .solo { display: flex; gap: 7px; padding: 2px 0 0 10px; }

  .status { display: flex; align-items: center; height: 10px; background: #262626; padding: 0 23px 0 1px; }
  .status button { color: #777; }
  .progress { width: 84px; height: 10px; margin-left: auto; background: #191919; border-radius: 5px; overflow: hidden; }
  .progress div { width: 80%; height: 100%; background: #2d8ceb; }

  .dialog { position: absolute; right: 135px; bottom: 0; width: 439px; background: #252525; box-shadow: 0 0 4px #000; }
  .dlg-title { display: flex; align-items: center; gap: 4px; height: 10px; padding-left: 4px; background: #f4f4f4; }
  .dlg-title span:last-child { margin-left: 1px; }
  .dlg-bar { display: flex; align-items: center; height: 22px; padding: 0 7px 0 6px; border-bottom: 1px solid #1b1b1b; }
  .presets-label { margin-left: 4px; padding-left: 6px; border-left: 1px solid #333; }
  .presets { width: 182px; margin-left: 2px; }
  .dlg-icons { display: flex; gap: 7px; margin-left: auto; color: #b8b8b8; }
  .dlg-icons button { color: inherit; }
  .dlg-main { display: grid; grid-template-columns: 45px 382px; padding-top: 3px; }
  .gain { display: flex; flex-direction: column; align-items: center; white-space: nowrap; }
  .gain-scale { display: grid; margin-top: 4px; }
  .gain-scale > * { grid-area: 1 / 1; }
  .gain-scale text { text-anchor: end; }
  .gain-scale input { appearance: none; writing-mode: vertical-lr; direction: rtl; width: 9px; height: 106px; margin-left: 17px; }
  .gain-scale input::-webkit-slider-thumb { appearance: none; width: 8px; height: 8px; border: 1px solid #b8b8b8; border-radius: 50%; background: #252525; }
  .gain-value { margin-top: 7px; }
  .dialog b { font-weight: 400; color: #359be8; }
  .freq { text-anchor: middle; fill: #505050; }
  .freq.strong { fill: #a8a8a8; }
  .point { text-anchor: middle; fill: #fff; font-weight: 700; }
  .dlg-bands { display: grid; grid-template-columns: 39px 64px 41px repeat(6, 39px) 57px; height: 90px; padding-top: 11px; }
  .row-names { display: flex; flex-direction: column; gap: 10px; text-align: right; white-space: nowrap; }
  .band { display: flex; flex-direction: column; align-items: flex-end; gap: 4px; height: 71px; padding: 1px 4px 0 0; border-right: 1px solid #2d2d2d; white-space: nowrap; }
  .q { margin-right: 9px; }
  .toggle { width: 16px; height: 12px; justify-content: center; margin: 0 7px 0 0; background: #1b1b1b; outline: 1px solid #2c2c2c; color: #b0b0b0; }
  .toggle.on { color: #359be8; background: #181818; }
  .shelf { width: 16px; height: 10px; justify-content: center; margin-right: 7px; background: #1b1b1b; color: #d0d0d0; }
  .band.pass { align-items: center; padding: 1px 4px 0 8px; }
  .band.pass .picker { width: 51px; height: 12px; margin-bottom: 12px; }
  .band.pass .toggle { width: 20px; margin: 0; }
  .band.low { border: 0; padding: 1px 0 0 4px; color: #505050; }
  .band.pass .hz { align-self: flex-start; margin-left: 9px; }
  .band.low .hz { margin-left: 3px; }
  .dlg-foot { display: flex; align-items: center; height: 21px; padding-left: 96px; border-top: 1px solid #1b1b1b; white-space: nowrap; }
  .dlg-foot label { display: flex; align-items: center; gap: 3px; margin-left: 5px; }
  .dlg-foot .quiet { margin-left: 12px; }
  .range-name { margin-left: 12px; }
  input[type="radio"] { appearance: none; width: 8px; height: 8px; border: 1px solid #b0b0b0; border-radius: 50%; }
  input[type="radio"]:checked { background: #b0b0b0; }
</style>
